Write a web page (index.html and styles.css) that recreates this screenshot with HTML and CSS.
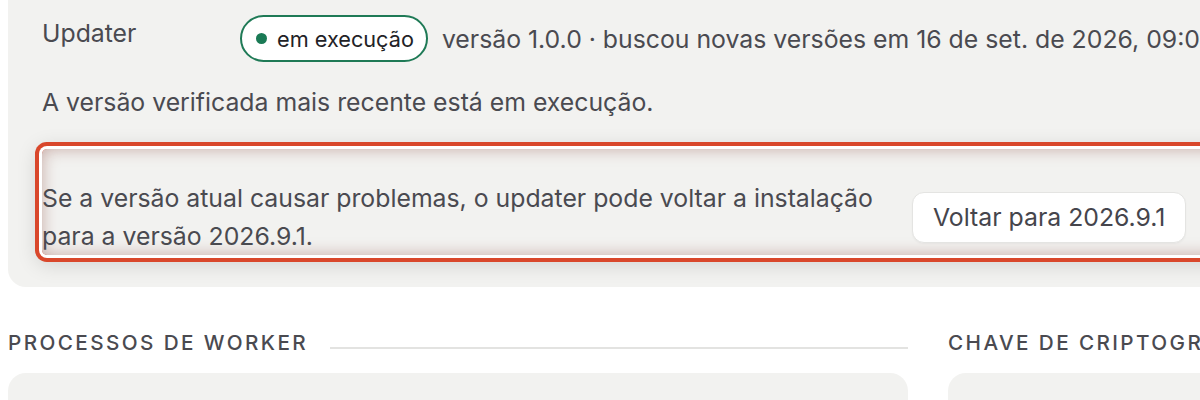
FILE: index.html
```html
<!DOCTYPE html>
<html lang="pt-BR">
<head>
    <meta charset="UTF-8">
    <meta name="viewport" content="width=device-width, initial-scale=1.0">
    <title>Updater</title>
    <link rel="stylesheet" href="styles.css">
</head>
<body>
    <main class="page">
        <!-- Updater status card -->
        <section class="card updater-card">
            <div class="status-row">
                <span class="status-label">Updater</span>
                <div class="status-value">
                    <span class="badge"><span class="dot"></span>em execução</span>
                    <span class="meta">versão 1.0.0 · buscou novas versões em 16 de set. de 2026, 09:00</span>
                </div>
            </div>
            <p class="note">A versão verificada mais recente está em execução.</p>

            <div class="rollback highlight">
                <p>Se a versão atual causar problemas, o updater pode voltar a instalação para a versão 2026.9.1.</p>
                <button class="btn">Voltar para 2026.9.1</button>
            </div>
        </section>

        <!-- Lower sections -->
        <div class="columns">
            <section class="column">
                <h2 class="section-title"><span>Processos de worker</span></h2>
                <div class="card panel"></div>
            </section>
            <section class="column">
                <h2 class="section-title"><span>Chave de criptografia</span></h2>
                <div class="card panel"></div>
            </section>
        </div>
    </main>
</body>
</html>
```

FILE: styles.css
```css
/* Basic page styling */
body {
    margin: 0;
    padding: 0 8px;
    background-color: #ffffff;
    font-family: Inter, "Liberation Sans", Arial, sans-serif;
    color: #4a4a50;
    overflow: hidden;
}

.page {
    width: 1400px;
}

.card {
    background-color: #f2f2f0;
    border-radius: 18px;
}

/* Updater card */
.updater-card {
    margin-top: -24px;
    padding: 39px 34px 32px;
}

.status-row {
    display: flex;
    align-items: flex-start;
}

.status-label {
    width: 198px;
    flex-shrink: 0;
    font-size: 24.8px;
    line-height: 36px;
}

.status-value {
    display: flex;
    align-items: center;
    gap: 14px;
    white-space: nowrap;
}

.badge {
    display: inline-flex;
    align-items: center;
    gap: 10px;
    height: 43px;
    padding: 0 12px 0 14px;
    border: 2px solid #1f7a56;
    border-radius: 24px;
    background-color: #ffffff;
    color: #222226;
    font-size: 21.7px;
}

.dot {
    width: 11px;
    height: 11px;
    border-radius: 50%;
    background-color: #1a7a55;
}

.meta {
    font-size: 24.8px;
}

.note {
    margin: 22px 0 0;
    font-size: 24.8px;
    line-height: 36px;
}

/* Rollback row */
.rollback {
    display: flex;
    align-items: center;
    gap: 20px;
    margin-top: 29px;
    padding-top: 30px;
    border-radius: 5px;
}

.rollback p {
    max-width: 850px;
    margin: 0;
    font-size: 24.8px;
    line-height: 38px;
}

.btn {
    flex-shrink: 0;
    height: 51px;
    padding: 0 20px;
    border: 1px solid #e4e4e2;
    border-radius: 12px;
    background-color: #ffffff;
    color: #45454c;
    font-family: inherit;
    font-size: 24.8px;
    box-shadow: 0 1px 2px rgba(0, 0, 0, 0.04);
}

/* Selection highlight drawn around the rollback row */
.highlight {
    box-shadow:
        0 0 0 3px #ffffff,
        0 0 0 7px #d9472b,
        0 4px 20px 6px rgba(0, 0, 0, 0.13),
        inset 0 0 16px rgba(130, 50, 40, 0.38);
}

/* Lower columns */
.columns {
    display: grid;
    grid-template-columns: 900px 460px;
    gap: 40px;
    margin-top: 43px;
}

.section-title {
    display: flex;
    align-items: flex-end;
    gap: 22px;
    margin: 0 0 18px;
    font-size: 20.7px;
    font-weight: 500;
    letter-spacing: 2.4px;
    text-transform: uppercase;
    color: #4a4a50;
    white-space: nowrap;
}

.section-title::after {
    content: "";
    flex: 1;
    height: 2px;
    margin-bottom: 6px;
    background-color: #e3e3e1;
}

.panel {
    height: 120px;
}
```
